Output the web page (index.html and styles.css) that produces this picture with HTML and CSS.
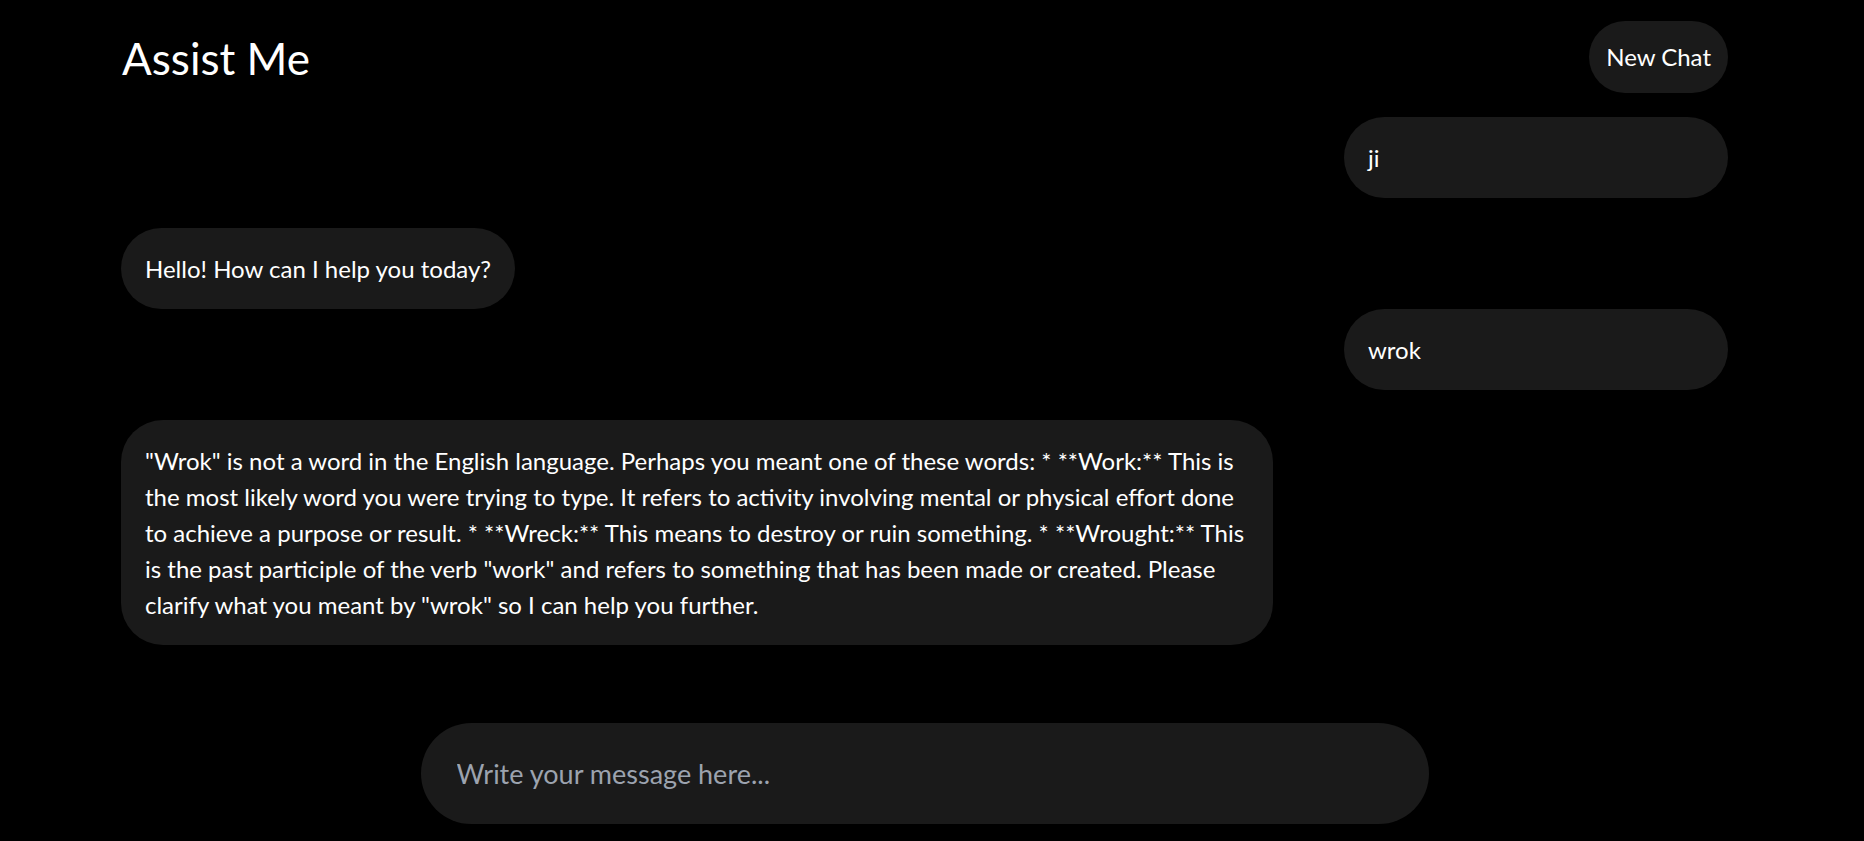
FILE: index.html
```html
<!DOCTYPE html>
<html lang="en">
<head>
<meta charset="utf-8">
<title>Assist Me</title>
<link rel="stylesheet" href="styles.css">
</head>
<body>
<div class="page">
  <header class="header">
    <h1 class="title">Assist Me</h1>
    <button class="new-chat" type="button">New Chat</button>
  </header>
  <main class="messages">
    <div class="msg msg-user"><div class="bubble bubble-user">ji</div></div>
    <div class="msg msg-bot"><div class="bubble bubble-bot">Hello! How can I help you today?</div></div>
    <div class="msg msg-user"><div class="bubble bubble-user">wrok</div></div>
    <div class="msg msg-bot"><div class="bubble bubble-bot">"Wrok" is not a word in the English language. Perhaps you meant one of these words: * **Work:** This is the most likely word you were trying to type. It refers to activity involving mental or physical effort done to achieve a purpose or result. * **Wreck:** This means to destroy or ruin something. * **Wrought:** This is the past participle of the verb "work" and refers to something that has been made or created. Please clarify what you meant by "wrok" so I can help you further.</div></div>
  </main>
  <footer class="composer">
    <input class="composer-input" type="text" placeholder="Write your message here...">
  </footer>
</div>
</body>
</html>
```
FILE: styles.css
```css
* { box-sizing: border-box; }
html, body { margin: 0; padding: 0; background: #000; }
body {
  color: #fff;
  font-family: "Lato", "Liberation Sans", sans-serif;
  font-size: 24px;
  line-height: 36px;
}
.page {
  height: 841px;
  padding: 21px 136px 17px 121px;
  display: flex;
  flex-direction: column;
}
.header {
  display: flex;
  justify-content: space-between;
  align-items: center;
  height: 72px;
}
.title {
  margin: 2px 0 0 1px;
  font-size: 44px;
  font-weight: 400;
  line-height: 53px;
}
.new-chat {
  font-family: inherit;
  font-size: 24px;
  line-height: 36px;
  color: #fff;
  background: #1a1a1a;
  border: none;
  border-radius: 36px;
  padding: 18px 17px;
}
.messages {
  flex: 1;
  display: flex;
  flex-direction: column;
  padding-top: 24px;
}
.msg { display: flex; }
.msg-user { justify-content: flex-end; margin-bottom: 30px; }
.msg-bot { justify-content: flex-start; }
.bubble {
  background: #1a1a1a;
  padding: 23px 24px 22px;
  border-radius: 42px;
}
.bubble-user { min-width: 384px; }
.bubble-bot { max-width: 1152px; }
.composer {
  display: flex;
  justify-content: center;
}
.composer-input {
  width: 1008px;
  height: 101px;
  border: none;
  outline: none;
  border-radius: 51px;
  background: #1a1a1a;
  color: #fff;
  padding: 0 36px;
  font-family: "Lato", "Liberation Sans", sans-serif;
  font-size: 27px;
}
.composer-input::placeholder { color: #9ca3af; opacity: 1; }
```
